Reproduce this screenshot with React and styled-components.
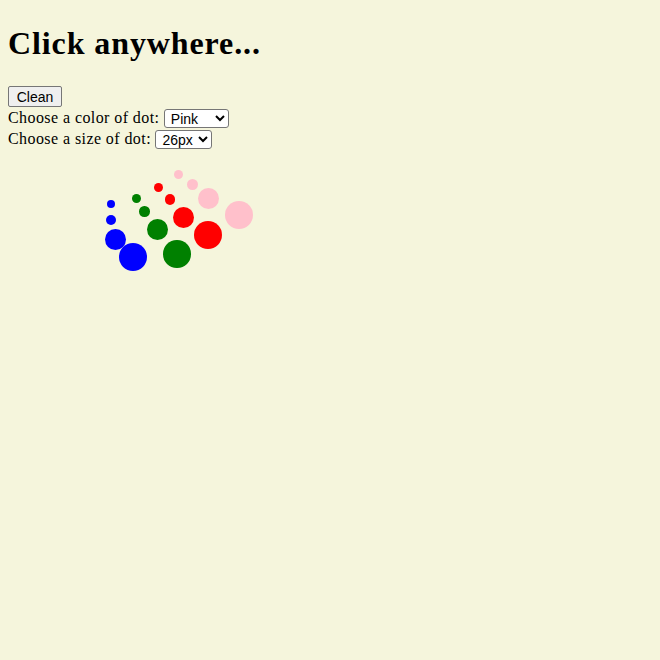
import React, { useState } from "react";
import styled, { createGlobalStyle } from "styled-components";

const Global = createGlobalStyle`
  html, body {
    background: #f5f5dc;
  }
  body {
    margin: 8px;
    font-family: "Liberation Serif", "Times New Roman", serif;
    font-size: 16px;
    color: #000;
  }
`;

const Page = styled.div`
  min-height: 644px;
  display: flow-root;
`;

const Title = styled.h1`
  font-family: "Liberation Serif", "Times New Roman", serif;
  font-size: 32px;
  font-weight: bold;
  letter-spacing: 0.9px;
  margin: 17px 0 24px;
  line-height: 37px;
`;

const Controls = styled.div`
  display: flex;
  flex-direction: column;
  align-items: flex-start;
`;

const CleanButton = styled.button`
  font-family: "Liberation Sans", Arial, sans-serif;
  font-size: 14px;
  width: 54px;
  height: 21px;
  padding: 1px 6px;
  background: #efefef;
  border: 1px solid #767676;
  border-radius: 2px;
  color: #000;
  margin: 0;
`;

const Row = styled.label`
  display: flex;
  align-items: center;
  height: 21px;
  line-height: 18px;
  letter-spacing: 0.42px;
  white-space: pre;
`;

const Select = styled.select`
  font-family: "Liberation Sans", Arial, sans-serif;
  font-size: 14px;
  letter-spacing: 0;
  width: ${(p) => p.$width}px;
  height: 19px;
  margin: 1px 0 0;
  padding: 0 0 0 2px;
  background: #fff;
  border: 1px solid #767676;
  border-radius: 3px;
  color: #000;
`;

const Dot = styled.div`
  position: absolute;
  width: ${(p) => p.$size}px;
  height: ${(p) => p.$size}px;
  border-radius: 50%;
  background: ${(p) => p.$color};
  pointer-events: none;
`;

const colorMap = { Blue: "blue", Green: "green", Red: "red", Pink: "pink" };
const sizeMap = { "8px": 8, "10px": 10, "20px": 21, "26px": 28 };

const initialDots = [
  ["blue", 111.3, 203.8, 8],
  ["blue", 110.5, 220, 10],
  ["blue", 115, 239, 21],
  ["blue", 133, 257, 28],
  ["green", 136.7, 198, 9],
  ["green", 144.3, 211.5, 10.5],
  ["green", 157.7, 229.7, 21],
  ["green", 177, 254, 27.5],
  ["red", 158, 187.7, 9],
  ["red", 169.8, 199.5, 10.5],
  ["red", 183, 217, 21],
  ["red", 208, 235, 28],
  ["pink", 178.3, 174, 9],
  ["pink", 192.5, 184.5, 11],
  ["pink", 208.7, 198.3, 21],
  ["pink", 239, 214.5, 28],
].map(([color, cx, cy, size], i) => ({ id: i, color, cx, cy, size }));

export default function App() {
  const [dots, setDots] = useState(initialDots);
  const [color, setColor] = useState("Pink");
  const [size, setSize] = useState("26px");

  const handleClick = (e) => {
    if (e.target.closest("button, select, label")) return;
    setDots((d) => [
      ...d,
      { id: Date.now(), color: colorMap[color], cx: e.pageX, cy: e.pageY, size: sizeMap[size] },
    ]);
  };

  return (
    <Page onClick={handleClick}>
      <Global />
      <Title>Click anywhere...</Title>
      <Controls>
        <CleanButton onClick={() => setDots([])}>Clean</CleanButton>
        <Row>
          {"Choose a color of dot: "}
          <Select $width={65} value={color} onChange={(e) => setColor(e.target.value)}>
            {Object.keys(colorMap).map((c) => (
              <option key={c}>{c}</option>
            ))}
          </Select>
        </Row>
        <Row>
          {"Choose a size of dot: "}
          <Select $width={57} value={size} onChange={(e) => setSize(e.target.value)}>
            {Object.keys(sizeMap).map((s) => (
              <option key={s}>{s}</option>
            ))}
          </Select>
        </Row>
      </Controls>
      {dots.map((d) => (
        <Dot
          key={d.id}
          $color={d.color}
          $size={d.size}
          style={{ left: d.cx - d.size / 2, top: d.cy - d.size / 2 }}
        />
      ))}
    </Page>
  );
}
